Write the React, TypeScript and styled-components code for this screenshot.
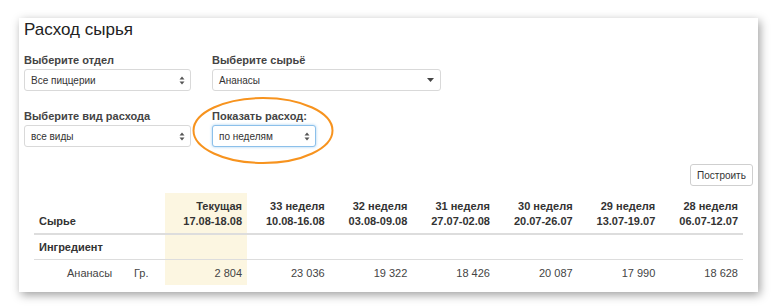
import React from 'react';
import styled, { createGlobalStyle } from 'styled-components';

const GlobalStyle = createGlobalStyle`
  html, body {
    margin: 0;
    padding: 0;
    background: #FFFFFF;
  }
  body {
    font-family: "Liberation Sans", Arial, sans-serif;
    color: #333333;
  }
`;

const Page = styled.div`
  width: 780px;
  height: 307px;
  padding: 18px 0 0 19px;
  box-sizing: border-box;
`;

const Panel = styled.div`
  width: 739px;
  height: 274px;
  background: #FFFFFF;
  box-shadow: 2px 3px 9px rgba(0, 0, 0, 0.38);
  display: flex;
  flex-direction: column;
  box-sizing: border-box;
`;

const Title = styled.h1`
  margin: 1px 0 0 5px;
  font-size: 17px;
  font-weight: normal;
  line-height: 22px;
  color: #222222;
`;

const FormGrid = styled.div`
  display: grid;
  grid-template-columns: 167px auto;
  column-gap: 21px;
  row-gap: 18px;
  margin: 12px 0 0 5px;
`;

const Field = styled.div`
  position: relative;
  display: flex;
  flex-direction: column;
  align-items: flex-start;

  & > label {
    font-size: 11px;
    font-weight: bold;
    line-height: 14px;
    color: #444444;
    margin-bottom: 2px;
  }
`;

const SelectBox = styled.div<{ $width: number; $focused?: boolean }>`
  width: ${p => p.$width}px;
  height: 22px;
  box-sizing: border-box;
  display: flex;
  align-items: center;
  justify-content: space-between;
  padding: 0 5px 0 6px;
  border: 1px solid ${p => (p.$focused ? '#8cc0ea' : '#d9d9d9')};
  border-radius: 3px;
  background: #FFFFFF;
  box-shadow: ${p => (p.$focused ? '0 0 3px rgba(102, 175, 233, 0.6)' : 'none')};
  font-size: 10px;
  color: #333333;
`;

const Highlight = styled.svg`
  position: absolute;
  left: -20px;
  top: -13px;
  pointer-events: none;
`;

const Toolbar = styled.div`
  display: flex;
  justify-content: flex-end;
  margin: 17px 5px 0 0;
`;

const Button = styled.button`
  width: 63px;
  height: 22px;
  padding: 0;
  background: #FFFFFF;
  border: 1px solid #cfcfcf;
  border-radius: 3px;
  font-family: "Liberation Sans", Arial, sans-serif;
  font-size: 10px;
  color: #333333;
`;

const TableWrap = styled.div`
  margin: 7px 15px 0 15px;
`;

const Table = styled.table`
  width: 709px;
  border-collapse: collapse;
  table-layout: fixed;
  font-size: 11px;
  color: #333333;
`;

const Th = styled.th<{ $current?: boolean; $left?: boolean }>`
  text-align: ${p => (p.$left ? 'left' : 'right')};
  vertical-align: bottom;
  padding: 6px 5px 4px 5px;
  line-height: 15px;
  font-weight: bold;
  border-bottom: 2px solid #dddddd;
  background: ${p => (p.$current ? '#fcf6e1' : 'transparent')};
  white-space: nowrap;
`;

const Td = styled.td<{ $current?: boolean; $left?: boolean; $bold?: boolean; $indent?: number; $line?: boolean }>`
  text-align: ${p => (p.$left ? 'left' : 'right')};
  padding: 0 5px 0 ${p => 5 + (p.$indent || 0)}px;
  height: ${p => (p.$line ? 24 : 25)}px;
  font-weight: ${p => (p.$bold ? 'bold' : 'normal')};
  color: ${p => (p.$bold ? '#333333' : '#444444')};
  border-bottom: ${p => (p.$line ? '1px solid #dddddd' : 'none')};
  background: ${p => (p.$current ? '#fcf6e1' : 'transparent')};
  white-space: nowrap;
`;

const UpDown = () => (
  <svg width="6" height="9" viewBox="0 0 6 9">
    <path d="M3 0.5 L5.5 3.5 H0.5 Z" fill="#555" />
    <path d="M3 8.5 L5.5 5.5 H0.5 Z" fill="#555" />
  </svg>
);

const Caret = () => (
  <svg width="7" height="4" viewBox="0 0 7 4" style={{ marginRight: 1 }}>
    <path d="M0 0 H7 L3.5 4 Z" fill="#444" />
  </svg>
);

const weeks = [
  { title: 'Текущая', dates: '17.08-18.08', value: '2 804', current: true },
  { title: '33 неделя', dates: '10.08-16.08', value: '23 036' },
  { title: '32 неделя', dates: '03.08-09.08', value: '19 322' },
  { title: '31 неделя', dates: '27.07-02.08', value: '18 426' },
  { title: '30 неделя', dates: '20.07-26.07', value: '20 087' },
  { title: '29 неделя', dates: '13.07-19.07', value: '17 990' },
  { title: '28 неделя', dates: '06.07-12.07', value: '18 628' },
];

const App = () => {
  return (
    <Page>
      <GlobalStyle />
      <Panel>
        <Title>Расход сырья</Title>
        <FormGrid>
          <Field>
            <label>Выберите отдел</label>
            <SelectBox $width={167}>
              <span>Все пиццерии</span>
              <UpDown />
            </SelectBox>
          </Field>
          <Field>
            <label>Выберите сырьё</label>
            <SelectBox $width={229}>
              <span>Ананасы</span>
              <Caret />
            </SelectBox>
          </Field>
          <Field>
            <label>Выберите вид расхода</label>
            <SelectBox $width={167}>
              <span>все виды</span>
              <UpDown />
            </SelectBox>
          </Field>
          <Field>
            <label>Показать расход:</label>
            <SelectBox $width={104} $focused>
              <span>по неделям</span>
              <UpDown />
            </SelectBox>
            <Highlight width="142" height="69" viewBox="0 0 142 69">
              <ellipse cx="71" cy="34.5" rx="69.5" ry="32.5" fill="none" stroke="#f7931e" strokeWidth="2" />
            </Highlight>
          </Field>
        </FormGrid>
        <Toolbar>
          <Button type="button">Построить</Button>
        </Toolbar>
        <TableWrap>
          <Table>
            <colgroup>
              <col style={{ width: 96 }} />
              <col style={{ width: 35 }} />
              <col style={{ width: 82 }} />
            </colgroup>
            <thead>
              <tr>
                <Th $left>Сырье</Th>
                <Th />
                {weeks.map(w => (
                  <Th key={w.title} $current={w.current}>
                    {w.title}
                    <br />
                    {w.dates}
                  </Th>
                ))}
              </tr>
            </thead>
            <tbody>
              <tr>
                <Td $left $bold $line colSpan={2}>Ингредиент</Td>
                {weeks.map(w => (
                  <Td key={w.title} $line $current={w.current} />
                ))}
              </tr>
              <tr>
                <Td $left $indent={28}>Ананасы</Td>
                <Td $left $indent={-1}>Гр.</Td>
                {weeks.map(w => (
                  <Td key={w.title} $current={w.current}>{w.value}</Td>
                ))}
              </tr>
            </tbody>
          </Table>
        </TableWrap>
      </Panel>
    </Page>
  );
};

export default App;
